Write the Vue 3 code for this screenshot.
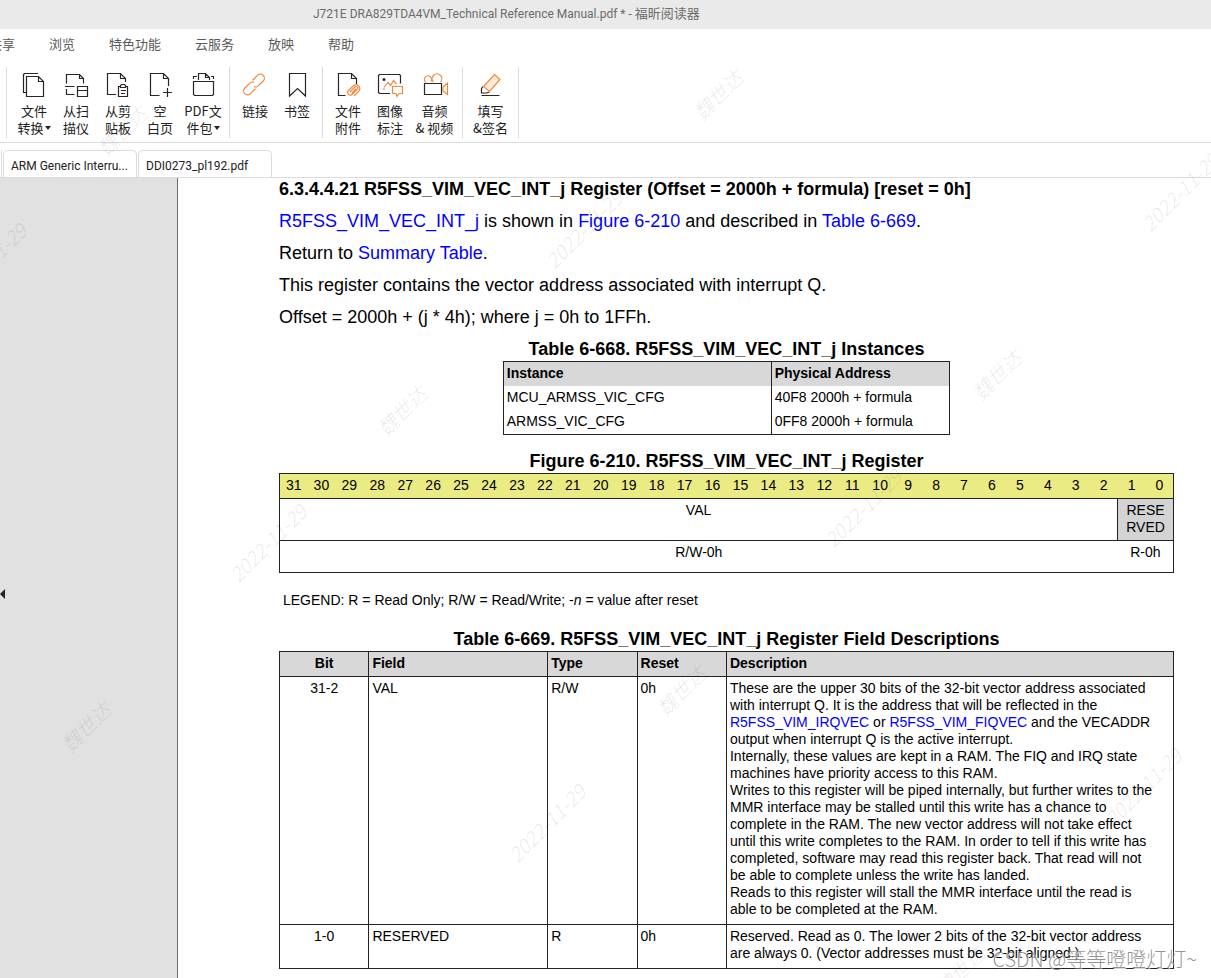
<script setup>
const menus = ['共享', '浏览', '特色功能', '云服务', '放映', '帮助']

const groups = [
  [
    { icon: 'convert', lines: ['文件', '转换'], drop: true },
    { icon: 'scan', lines: ['从扫', '描仪'] },
    { icon: 'clipboard', lines: ['从剪', '贴板'] },
    { icon: 'blank', lines: ['空', '白页'] },
    { icon: 'portfolio', lines: ['PDF文', '件包'], drop: true, size: 'mid' },
  ],
  [
    { icon: 'link', lines: ['链接'] },
    { icon: 'bookmark', lines: ['书签'] },
  ],
  [
    { icon: 'attach', lines: ['文件', '附件'] },
    { icon: 'image', lines: ['图像', '标注'] },
    { icon: 'video', lines: ['音频', '& 视频'], size: 'wide' },
  ],
  [{ icon: 'sign', lines: ['填写', '&签名'], size: 'wide' }],
]

const bits = Array.from({ length: 32 }, (_, i) => 31 - i)

const marks = [
  { text: '魏世达', x: 122, y: 131 },
  { text: '魏世达', x: 718, y: 95 },
  { text: '魏世达', x: 402, y: 411 },
  { text: '魏世达', x: 997, y: 375 },
  { text: '魏世达', x: 86, y: 727 },
  { text: '魏世达', x: 681, y: 691 },
  { text: '魏世达', x: 960, y: 971 },
  { text: '2022-11-29', x: -12, y: 262 },
  { text: '2022-11-29', x: 584, y: 229 },
  { text: '2022-11-29', x: 1180, y: 192 },
  { text: '2022-11-29', x: 268, y: 543 },
  { text: '2022-11-29', x: 863, y: 508 },
  { text: '2022-11-29', x: 547, y: 823 },
  { text: '2022-11-29', x: 1143, y: 787 },
]
</script>

<template>
  <div class="app">
    <header class="titlebar">J721E DRA829TDA4VM_Technical Reference Manual.pdf * - <span class="appname">福昕阅读器</span></header>

    <nav class="menubar">
      <button v-for="m in menus" :key="m" type="button" class="menu">{{ m }}</button>
    </nav>

    <div class="toolbar">
      <div v-for="(group, gi) in groups" :key="gi" class="group">
        <button v-for="t in group" :key="t.icon" type="button" class="tool" :class="t.size">
          <svg class="icon" viewBox="0 0 28 28" width="28" height="28" aria-hidden="true">
            <g v-if="t.icon === 'convert'">
              <path d="M6.5 21.5h-3v-18l1-1H18" />
              <path d="M6.5 5.5h12l5 5v15h-17zM18.5 5.5v5h5" />
            </g>
            <g v-else-if="t.icon === 'scan'">
              <path d="M4.5 12.5v-9h13l4 4v5M17.5 3.5v4h4M3 15.5h9.5M4.5 18v5.500h8" />
              <path d="M15.500 15.500h10v10h-10zM15.500 19.500h10" />
            </g>
            <g v-else-if="t.icon === 'clipboard'">
              <path d="M12 23.500H3.500v-21h13l5 5V11M16.500 2.500v5h5" />
              <path d="M16.500 15.500h-2v10h9v-10h-2M16.500 16.500v-2l1-1h3l1 1v2zM17 19.500h5M17 22.500h4" />
            </g>
            <g v-else-if="t.icon === 'blank'">
              <path d="M13.500 24.500h-9v-22h13l5 5V15M17.500 2.500v5h5M21.500 17v9M17 21.500h9" />
            </g>
            <g v-else-if="t.icon === 'portfolio'">
              <path d="M4.500 10.500h20v13l-1 1h-18l-1-1zM4.500 8V5.500H8M9.500 9V2.500h7l4 4V9M16.500 2.500v4h4M22 5.500h2.500V8" />
            </g>
            <g v-else-if="t.icon === 'link'" class="orange" transform="rotate(-45 13 13.500)">
              <path d="M11 17.500h-7a4 4 0 0 1 0-8h7a4 4 0 0 1 3.500 2.500" />
              <path d="M15 9.500h7a4 4 0 0 1 0 8h-7a4 4 0 0 1-3.500-2.500" />
            </g>
            <g v-else-if="t.icon === 'bookmark'">
              <path d="M6.500 2.500h16v22.500l-8-7.500-8 7.500z" />
            </g>
            <g v-else-if="t.icon === 'attach'">
              <path d="M11.500 24.500h-7v-22h13l5 5V13M17.500 2.500v5h5" />
              <path class="orange" d="M16 21l5-5a1.500 1.500 0 0 1 2.300 2l-5.300 5.500a2.700 2.700 0 0 1-3.800-3.800l5.500-5.200a3.800 3.800 0 0 1 5.300 5.300L20 25M18 22l4-4" />
            </g>
            <g v-else-if="t.icon === 'image'">
              <path d="M14 22.500H3.500l-1-1v-17l1-1h20l1 1v8" />
              <circle class="dot" cx="8" cy="8.500" r="1.500" />
              <path class="orange" d="M6.500 18h2.500M8 16.500l4-5 2.500 3 3-5 3 3.500M16.500 15.500h10v7h-3.500l-2 3-1-3h-3.500z" />
            </g>
            <g v-else-if="t.icon === 'video'">
              <path d="M3.500 12.500h17v11h-17z" />
              <path class="orange" d="M5 11.500a3.600 3.600 0 1 1 5-1M12.500 11a4.800 4.800 0 1 1 7 0M22 16l4.500-4v11.500L22 20z" />
            </g>
            <g v-else>
              <path d="M6 15.500l-1.500 2v4.500h5l3-1M4.500 24.500h18" />
              <path class="orange tint" d="M17.500 3.500l5.500 5-10.500 12-6-5z" />
            </g>
          </svg>
          <span v-for="(line, li) in t.lines" :key="li" class="line">
            {{ line }}<i v-if="t.drop && li === 1" class="caret"></i>
          </span>
        </button>
      </div>
    </div>

    <div class="tabs">
      <span class="tab stub"></span>
      <button type="button" class="tab">ARM Generic Interru...</button>
      <button type="button" class="tab">DDI0273_pl192.pdf</button>
    </div>

    <div class="body">
      <aside class="side">
        <button type="button" class="collapse" aria-label="收起"></button>
      </aside>

      <main class="page">
        <h1>6.3.4.4.21 R5FSS_VIM_VEC_INT_j Register (Offset = 2000h + formula) [reset = 0h]</h1>
        <p><a href="#reg">R5FSS_VIM_VEC_INT_j</a> is shown in <a href="#fig">Figure 6-210</a> and described in <a href="#fields">Table 6-669</a>.</p>
        <p>Return to <a href="#summary">Summary Table</a>.</p>
        <p>This register contains the vector address associated with interrupt Q.</p>
        <p>Offset = 2000h + (j * 4h); where j = 0h to 1FFh.</p>

        <table class="instances">
          <caption>Table 6-668. R5FSS_VIM_VEC_INT_j Instances</caption>
          <thead>
            <tr><th>Instance</th><th>Physical Address</th></tr>
          </thead>
          <tbody>
            <tr><td>MCU_ARMSS_VIC_CFG</td><td>40F8 2000h + formula</td></tr>
            <tr><td>ARMSS_VIC_CFG</td><td>0FF8 2000h + formula</td></tr>
          </tbody>
        </table>

        <table id="fig" class="bits">
          <caption>Figure 6-210. R5FSS_VIM_VEC_INT_j Register</caption>
          <thead>
            <tr><th v-for="b in bits" :key="b">{{ b }}</th></tr>
          </thead>
          <tbody>
            <tr class="names"><td colspan="30">VAL</td><td colspan="2" class="reserved">RESE<br>RVED</td></tr>
            <tr class="access"><td colspan="30">R/W-0h</td><td colspan="2">R-0h</td></tr>
          </tbody>
        </table>

        <p class="legend">LEGEND: R = Read Only; R/W = Read/Write; -<em>n</em> = value after reset</p>

        <table id="fields" class="fields">
          <caption>Table 6-669. R5FSS_VIM_VEC_INT_j Register Field Descriptions</caption>
          <colgroup><col class="w1"><col class="w2"><col class="w1"><col class="w1"><col></colgroup>
          <thead>
            <tr><th>Bit</th><th>Field</th><th>Type</th><th>Reset</th><th>Description</th></tr>
          </thead>
          <tbody>
            <tr>
              <td>31-2</td><td>VAL</td><td>R/W</td><td>0h</td>
              <td>
                These are the upper 30 bits of the 32-bit vector address associated<br>
                with interrupt Q. It is the address that will be reflected in the<br>
                <a href="#irq">R5FSS_VIM_IRQVEC</a> or <a href="#fiq">R5FSS_VIM_FIQVEC</a> and the VECADDR<br>
                output when interrupt Q is the active interrupt.<br>
                Internally, these values are kept in a RAM. The FIQ and IRQ state<br>
                machines have priority access to this RAM.<br>
                Writes to this register will be piped internally, but further writes to the<br>
                MMR interface may be stalled until this write has a chance to<br>
                complete in the RAM. The new vector address will not take effect<br>
                until this write completes to the RAM. In order to tell if this write has<br>
                completed, software may read this register back. That read will not<br>
                be able to complete unless the write has landed.<br>
                Reads to this register will stall the MMR interface until the read is<br>
                able to be completed at the RAM.
              </td>
            </tr>
            <tr>
              <td>1-0</td><td>RESERVED</td><td>R</td><td>0h</td>
              <td>
                Reserved. Read as 0. The lower 2 bits of the 32-bit vector address<br>
                are always 0. (Vector addresses must be 32-bit aligned.)
              </td>
            </tr>
          </tbody>
        </table>
      </main>
    </div>

    <div class="marks" aria-hidden="true">
      <span
        v-for="(m, i) in marks"
        :key="i"
        class="mark"
        :style="{ left: m.x + 'px', top: m.y + 'px' }"
      >{{ m.text }}</span>
      <span class="credit">CSDN @等等噔噔灯灯~</span>
    </div>
  </div>
</template>

<style>
body {
  background: #fff;
}
</style>

<style scoped>
.app {
  position: relative;
  display: flex;
  flex-direction: column;
  height: 100vh;
  overflow: hidden;
  background: #fff;
  font-family: "Noto Sans CJK SC", sans-serif;
  font-size: 13px;
  color: #222;
}
button {
  margin: 0;
  padding: 0;
  border: 0;
  background: none;
  font: inherit;
  color: inherit;
}
.titlebar {
  flex: none;
  height: 29px;
  padding-left: 313px;
  background: #eaeaea;
  color: #6c6c6c;
  font-family: Roboto, "Noto Sans CJK SC", sans-serif;
  font-size: 12px;
  line-height: 28px;
  white-space: nowrap;
}
.appname {
  font-size: 13px;
}
.menubar {
  flex: none;
  display: flex;
  gap: 34px;
  height: 31px;
  margin-left: -11px;
  color: #5a5a5a;
}
.menu {
  padding-bottom: 2px;
  white-space: nowrap;
}
.toolbar {
  flex: none;
  display: flex;
  height: 71px;
  padding: 7px 0 4px 6px;
  border-bottom: 1px solid #dcdcdc;
}
.group {
  display: flex;
  padding: 0 4px;
  border-right: 1px solid #dcdcdc;
}
.group:first-child {
  padding-left: 6px;
  border-left: 1px solid #dcdcdc;
}
.tool {
  display: flex;
  flex-direction: column;
  align-items: center;
  width: 42px;
  padding-top: 4px;
  line-height: 17px;
  white-space: nowrap;
}
.tool.mid {
  width: 44px;
}
.tool.wide {
  width: 47px;
}
.icon {
  display: block;
  margin-bottom: 3px;
  fill: none;
  stroke: #2b2524;
  stroke-width: 1.2;
}
.icon .orange {
  stroke: #f0893a;
}
.icon .tint {
  fill: #fdeadb;
}
.icon .dot {
  fill: #2b2524;
  stroke: none;
}
.line {
  height: 17px;
}
.caret {
  display: inline-block;
  margin: 0 0 3px 1px;
  border: 3px solid transparent;
  border-top: 4px solid #222;
  border-bottom: 0;
}
.tabs {
  flex: none;
  display: flex;
  gap: 1px;
  height: 27px;
  padding-top: 7px;
  border-bottom: 1px solid #dcdcdc;
}
.tab {
  box-sizing: border-box;
  width: 134px;
  padding: 4px 0 0 7px;
  border: 1px solid #dcdcdc;
  border-bottom: 0;
  border-radius: 5px 5px 0 0;
  font-family: Roboto, "Noto Sans CJK SC", sans-serif;
  font-size: 12px;
  text-align: left;
  white-space: nowrap;
}
.tab.stub {
  width: 2px;
  padding: 0;
  border-width: 0 1px 0 0;
  border-radius: 0;
}
.body {
  flex: 1;
  display: flex;
  min-height: 0;
}
.side {
  position: relative;
  flex: none;
  width: 177px;
  background: #e1e1e1;
  border-right: 1px solid #6e6e6e;
}
.collapse {
  position: absolute;
  left: 0;
  top: 411px;
  border: 5px solid transparent;
  border-right-color: #222;
  border-left: 0;
}
.page {
  flex: 1;
  min-width: 0;
  padding: 1px 37px 0 101px;
  font-family: "Liberation Sans", Arial, sans-serif;
  font-size: 18px;
  line-height: 20px;
  color: #000;
}
h1 {
  margin: 0 0 12px;
  font-size: 18px;
  font-weight: bold;
}
p {
  margin: 0 0 12px;
}
a {
  color: #0000ff;
  text-decoration: none;
}
table {
  width: 100%;
  border-collapse: collapse;
  table-layout: fixed;
  border: 1px solid #222;
  font-size: 14px;
  line-height: 17px;
}
caption {
  padding-bottom: 2px;
  font-size: 18px;
  font-weight: bold;
  line-height: 20px;
  white-space: nowrap;
}
th,
td {
  box-sizing: border-box;
  padding: 3px 3px 4px;
  text-align: left;
  vertical-align: top;
}
th {
  background: #d8d8d8;
}
.instances {
  width: 50%;
  margin: 0 auto 16px;
}
.instances th:first-child {
  width: 60%;
}
.instances tr > * + * {
  border-left: 1px solid #222;
}
.bits th,
.bits td {
  padding-left: 0;
  padding-right: 0;
  text-align: center;
}
.bits th {
  background: #ebeb84;
  border-bottom: 1px solid #222;
  font-weight: normal;
}
.bits .names td {
  border-bottom: 1px solid #222;
}
.bits .reserved {
  background: #d3d3d3;
  border-left: 1px solid #222;
}
.bits .access td {
  padding-bottom: 11px;
}
.legend {
  margin: 19px 4px 20px;
  font-size: 14px;
  line-height: 17px;
}
.fields th,
.fields td {
  border: 1px solid #222;
}
.fields td {
  padding-bottom: 6px;
}
.fields tr > :first-child {
  text-align: center;
}
.w1 {
  width: 10%;
}
.w2 {
  width: 20%;
}
.marks {
  position: absolute;
  inset: 0;
  overflow: hidden;
  pointer-events: none;
}
.mark {
  position: absolute;
  color: rgba(0, 0, 0, 0.1);
  font-size: 20px;
  font-style: italic;
  font-weight: 300;
  line-height: 24px;
  white-space: nowrap;
  transform: translate(-50%, -50%) rotate(-45deg);
}
.credit {
  position: absolute;
  right: 14px;
  bottom: 5px;
  color: rgba(110, 110, 110, 0.75);
  font-size: 20px;
  font-weight: 300;
  line-height: 28px;
  text-shadow: 1px 1px 1px #fff;
}
</style>
